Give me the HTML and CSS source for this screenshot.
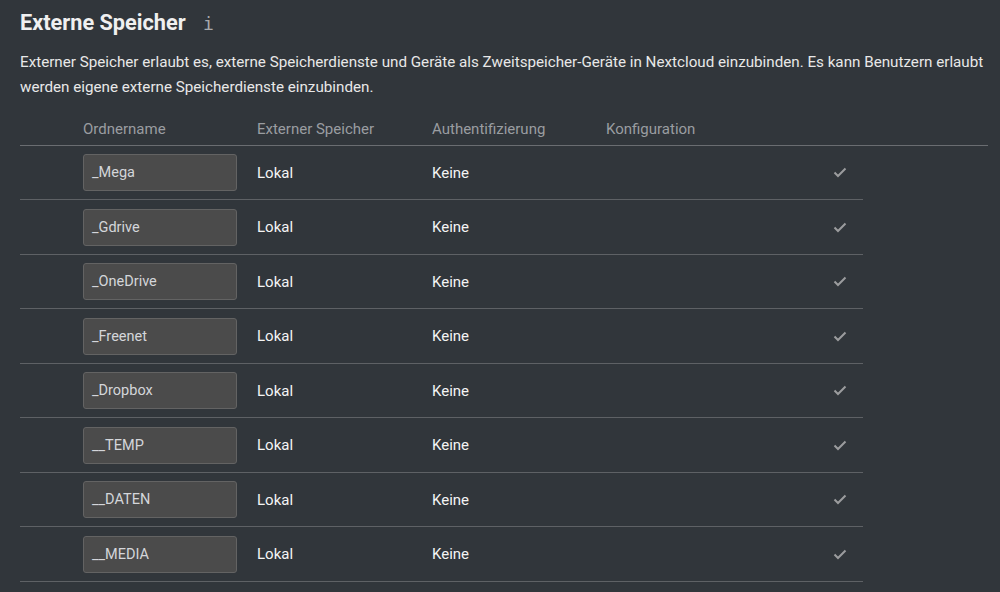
FILE: index.html
```html
<html>
<head>
<meta charset="utf-8" />
<title>Externe Speicher</title>
<link rel="stylesheet" href="styles.css">
</head>
<body>
<div class="section">
	<h2 class="title">Externe Speicher <span class="info">i</span></h2>
	<p class="desc">Externer Speicher erlaubt es, externe Speicherdienste und Geräte als Zweitspeicher-Geräte in Nextcloud einzubinden. Es kann Benutzern erlaubt werden eigene externe Speicherdienste einzubinden.</p>

	<table class="mounts">
		<thead>
			<tr>
				<th class="c-status"></th>
				<th class="c-name">Ordnername</th>
				<th class="c-backend">Externer Speicher</th>
				<th class="c-auth">Authentifizierung</th>
				<th class="c-conf">Konfiguration</th>
				<th class="c-ok"></th>
				<th class="c-rest"></th>
			</tr>
		</thead>
		<tbody id="rows"></tbody>
	</table>
</div>

<script>
	var names = ["_Mega", "_Gdrive", "_OneDrive", "_Freenet", "_Dropbox", "__TEMP", "__DATEN", "__MEDIA"];
	var html = "";
	for (var i = 0; i < names.length; i++) {
		html += '<tr>'
			+ '<td class="c-status"></td>'
			+ '<td class="c-name"><div class="field">' + names[i] + '</div></td>'
			+ '<td class="c-backend">Lokal</td>'
			+ '<td class="c-auth">Keine</td>'
			+ '<td class="c-conf"></td>'
			+ '<td class="c-ok"><svg width="14" height="11" viewBox="0 0 14 11"><path d="M1.5 5.5 L5 9 L12.5 1.5" fill="none" stroke="#9b9c9e" stroke-width="2"/></svg></td>'
			+ '<td class="c-rest"></td>'
			+ '</tr>';
	}
	document.getElementById("rows").innerHTML = html;
</script>
</body>
</html>
```

FILE: styles.css
```css
body{
	margin: 0;
	background: #31363b;
	color: #e6e6e6;
	font-family: Roboto, "Noto Sans", sans-serif;
}

.section{
	padding: 8px 12px 0 20px;
}

.title{
	margin: 0;
	font-size: 21.7px;
	font-weight: bold;
	line-height: 30px;
	color: #f0f0f0;
}

.info{
	display: inline-block;
	margin-left: 12px;
	font-family: "DejaVu Sans Mono", monospace;
	font-weight: normal;
	font-size: 18px;
	color: #a8a9ab;
}

.desc{
	margin: 11px 0 0 0;
	font-size: 15.2px;
	line-height: 25px;
	color: #e8e8e8;
}

.mounts{
	margin-top: 14px;
	width: 968px;
	border-collapse: collapse;
	table-layout: fixed;
}

.mounts th{
	height: 31px;
	padding: 0 0 7px 0;
	text-align: left;
	vertical-align: bottom;
	font-weight: normal;
	font-size: 15px;
	color: #9a9da1;
	border-bottom: 1px solid #6a6d71;
}

.mounts td{
	height: 54.5px;
	padding: 1px 0 0 0;
	font-size: 15px;
	color: #f4f4f4;
	border-bottom: 1px solid #5e6165;
}

.mounts td.c-rest{
	border-bottom: none;
}

.c-status{ width: 63px; }
.c-name{ width: 174px; }
.c-backend{ width: 175px; }
.c-auth{ width: 174px; }
.c-conf{ width: 227px; }
.c-ok{ width: 30px; }

.field{
	width: 152px;
	height: 35px;
	line-height: 35px;
	box-sizing: content-box;
	padding: 0;
	text-indent: 8px;
	background: #4b4b4b;
	border: 1px solid #636363;
	border-radius: 3px;
	color: #d4d6da;
	font-size: 14.5px;
}
```
